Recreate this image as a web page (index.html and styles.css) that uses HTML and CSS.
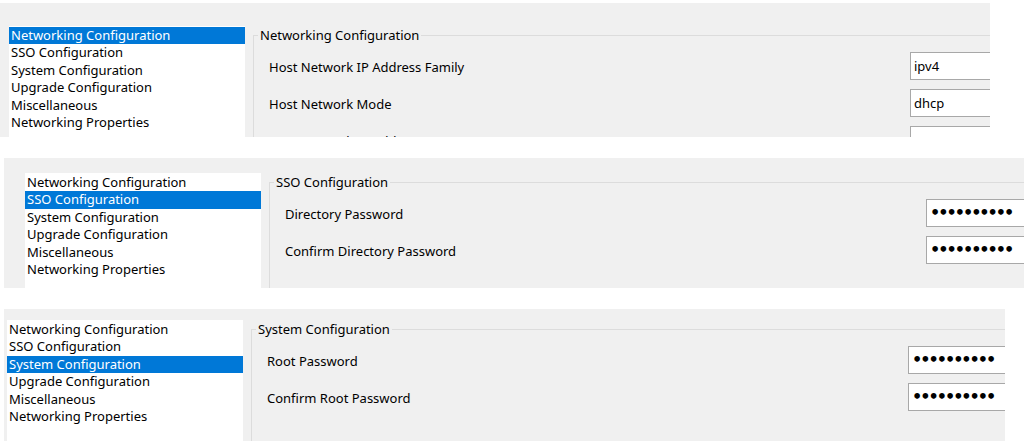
FILE: index.html
```html
<!DOCTYPE html>
<html>
<head>
<meta charset="utf-8">
<link rel="stylesheet" href="styles.css">
</head>
<body>
<div class="shots">
  <div class="shot shot-net">
    <div class="dialog">
      <ul class="nav">
        <li class="sel">Networking Configuration</li>
        <li>SSO Configuration</li>
        <li>System Configuration</li>
        <li>Upgrade Configuration</li>
        <li>Miscellaneous</li>
        <li>Networking Properties</li>
      </ul>
      <fieldset class="group">
        <legend>Networking Configuration</legend>
        <div class="rows">
          <span class="label">Host Network IP Address Family</span><span class="field">ipv4</span>
          <span class="label">Host Network Mode</span><span class="field">dhcp</span>
          <span class="label">Host Network IP Address</span><span class="field"></span>
        </div>
      </fieldset>
    </div>
  </div>

  <div class="shot shot-sso">
    <div class="dialog">
      <ul class="nav">
        <li>Networking Configuration</li>
        <li class="sel">SSO Configuration</li>
        <li>System Configuration</li>
        <li>Upgrade Configuration</li>
        <li>Miscellaneous</li>
        <li>Networking Properties</li>
      </ul>
      <fieldset class="group">
        <legend>SSO Configuration</legend>
        <div class="rows">
          <span class="label">Directory Password</span><span class="field pw">••••••••••</span>
          <span class="label">Confirm Directory Password</span><span class="field pw">••••••••••</span>
        </div>
      </fieldset>
    </div>
  </div>

  <div class="shot shot-sys">
    <div class="dialog">
      <ul class="nav">
        <li>Networking Configuration</li>
        <li>SSO Configuration</li>
        <li class="sel">System Configuration</li>
        <li>Upgrade Configuration</li>
        <li>Miscellaneous</li>
        <li>Networking Properties</li>
      </ul>
      <fieldset class="group">
        <legend>System Configuration</legend>
        <div class="rows">
          <span class="label">Root Password</span><span class="field pw">••••••••••</span>
          <span class="label">Confirm Root Password</span><span class="field pw">••••••••••</span>
        </div>
      </fieldset>
    </div>
  </div>
</div>
</body>
</html>
```

FILE: styles.css
```css
html, body {
  margin: 0;
  padding: 0;
  background: #ffffff;
}

body {
  font-family: "Noto Sans", "Open Sans", sans-serif;
  font-size: 13px;
  color: #000;
  width: 1024px;
  height: 441px;
  overflow: hidden;
}

.shots {
  display: flex;
  flex-direction: column;
}

.shot {
  background: #f0f0f0;
  overflow: hidden;
  box-sizing: border-box;
}

.shot-net {
  margin-top: 3px;
  margin-left: 0;
  width: 990px;
  height: 134px;
  padding: 23px 0 0 9px;
}

.shot-sso {
  margin-top: 21px;
  margin-left: 4px;
  width: 1020px;
  height: 130px;
  padding: 15px 0 0 21px;
}

.shot-sys {
  margin-top: 21px;
  margin-left: 4px;
  width: 1001px;
  height: 132px;
  padding: 11px 0 0 3px;
}

.dialog {
  display: flex;
  align-items: flex-start;
  gap: 8px;
}

.nav {
  list-style: none;
  margin: 0;
  padding: 1px 0 0 0;
  width: 236px;
  height: 220px;
  flex: none;
  background: #ffffff;
}

.nav li {
  height: 17.4px;
  line-height: 17.4px;
  padding-left: 2px;
  white-space: nowrap;
}

.nav li.sel {
  background: #0078d7;
  color: #ffffff;
}

.group {
  flex: none;
  margin: 1px 0 0 0;
  padding: 8px 0 40px 0;
  border: 1px solid #dcdcdc;
  min-width: 0;
  width: 1000px;
}

.group legend {
  margin-left: 4px;
  padding: 0 2px;
  line-height: 17px;
}

.rows {
  display: grid;
  grid-template-columns: 656px 200px;
  row-gap: 9px;
  align-items: center;
}

.label {
  padding-left: 15px;
  padding-top: 1px;
  white-space: nowrap;
}

.field {
  box-sizing: border-box;
  height: 28px;
  background: #ffffff;
  border: 1px solid #a8a8a8;
  padding: 0 3px;
  line-height: 26px;
  white-space: nowrap;
}

.field.pw {
  font-family: "DejaVu Sans", sans-serif;
  font-weight: bold;
  font-size: 16px;
  letter-spacing: -2px;
  padding-left: 3px;
}
```
